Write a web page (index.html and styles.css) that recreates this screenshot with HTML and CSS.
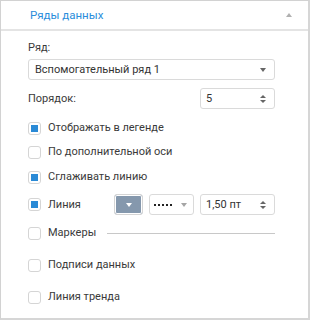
FILE: index.html
```html
<!DOCTYPE html>
<html lang="ru">

<head>
    <meta charset="UTF-8">
    <meta name="viewport" content="width=device-width, initial-scale=1.0">
    <link rel="stylesheet" href="styles.css">
</head>

<body>
    <div class="panel">
        <div class="head">
            <h2 class="title">Ряды данных</h2>
            <span class="collapse"></span>
        </div>

        <div class="content">
            <p class="label series-label">Ряд:</p>
            <div class="select">
                <span>Вспомогательный ряд 1</span>
                <span class="arrow"></span>
            </div>

            <div class="row order-row">
                <p class="label">Порядок:</p>
                <div class="spin">
                    <span>5</span>
                    <span class="spin-arrows"><i class="up"></i><i class="down"></i></span>
                </div>
            </div>

            <div class="check-row r1">
                <span class="check checked"></span>
                <p class="label">Отображать в легенде</p>
            </div>
            <div class="check-row r2">
                <span class="check"></span>
                <p class="label">По дополнительной оси</p>
            </div>
            <div class="check-row r3">
                <span class="check checked"></span>
                <p class="label">Сглаживать линию</p>
            </div>
            <div class="check-row line-row">
                <span class="check checked"></span>
                <p class="label line-label">Линия</p>
                <div class="color-btn"><span class="arrow white"></span></div>
                <div class="dash-select">
                    <span class="dots"></span>
                    <span class="arrow light"></span>
                </div>
                <div class="spin">
                    <span>1,50 пт</span>
                    <span class="spin-arrows"><i class="up"></i><i class="down"></i></span>
                </div>
            </div>
            <div class="check-row r5">
                <span class="check"></span>
                <p class="label markers-label">Маркеры</p>
                <span class="rule"></span>
            </div>
            <div class="check-row r6">
                <span class="check"></span>
                <p class="label">Подписи данных</p>
            </div>
            <div class="check-row r7">
                <span class="check"></span>
                <p class="label">Линия тренда</p>
            </div>
        </div>
    </div>
</body>

</html>
```

FILE: styles.css
```css
* {
    box-sizing: border-box;
    padding: 0;
    margin: 0;
    font-family: Roboto, "Noto Sans", sans-serif;
}

body {
    background-color: white;
}

.panel {
    width: 310px;
    height: 320px;
    border: 1px solid #d2d2d2;
    border-right: 2px solid #d6d6d6;
    border-bottom: 2px solid #d6d6d6;
    background-color: white;
}

.head {
    height: 30px;
    display: flex;
    align-items: center;
    justify-content: space-between;
    padding: 0 16px 1px 29px;
    border-bottom: 2px solid #e4e4e4;
}

.title {
    font-size: 11.5px;
    font-weight: normal;
    color: #2a8ddb;
}

.collapse {
    width: 0;
    height: 0;
    border-left: 3px solid transparent;
    border-right: 3px solid transparent;
    border-bottom: 4px solid #b0b0b0;
}

.content {
    padding: 0 33px 0 27px;
}

.label {
    font-size: 11px;
    line-height: 16px;
    color: #3a3a3a;
}

.series-label {
    margin-top: 9px;
}

.select {
    margin-top: 3px;
    height: 21px;
    border: 1px solid #dadada;
    border-radius: 3px;
    display: flex;
    align-items: center;
    justify-content: space-between;
    padding: 0 8px 0 6px;
    font-size: 11px;
    color: #333;
}

.arrow {
    width: 0;
    height: 0;
    border-left: 3.5px solid transparent;
    border-right: 3.5px solid transparent;
    border-top: 4px solid #666;
}

.arrow.white {
    border-top-color: white;
}

.arrow.light {
    border-top-color: #a5a5a5;
}

.row {
    display: flex;
    align-items: center;
    justify-content: space-between;
}

.order-row {
    margin-top: 8px;
}

.spin {
    width: 75px;
    height: 21px;
    border: 1px solid #dadada;
    border-radius: 3px;
    display: flex;
    align-items: center;
    justify-content: space-between;
    padding: 0 8px 0 5px;
    font-size: 11px;
    color: #333;
}

.spin-arrows {
    display: flex;
    flex-direction: column;
    gap: 2px;
}

.spin-arrows i {
    display: block;
    width: 0;
    height: 0;
    border-left: 3px solid transparent;
    border-right: 3px solid transparent;
}

.spin-arrows .up {
    border-bottom: 3px solid #666;
}

.spin-arrows .down {
    border-top: 3px solid #666;
}

.check-row {
    display: flex;
    align-items: center;
    height: 16px;
}

.check {
    width: 13px;
    height: 13px;
    border: 1px solid #d5d5d5;
    border-radius: 3px;
    margin-right: 7px;
    padding: 2px;
    flex-shrink: 0;
}

.check.checked::after {
    content: "";
    display: block;
    width: 7px;
    height: 7px;
    background-color: #2a8ad6;
}

.r1 { margin-top: 11px; }
.r2 { margin-top: 8px; }
.r3 { margin-top: 9px; }

.line-row {
    margin-top: 9px;
    height: 21px;
}

.line-label {
    width: 66px;
}

.color-btn {
    width: 29px;
    height: 21px;
    border: 1px solid #d5d5d5;
    border-radius: 3px;
    background-color: #8598ad;
    box-shadow: inset 0 0 0 1px #fff;
    display: flex;
    align-items: center;
    justify-content: center;
    margin-right: 6px;
}

.dash-select {
    width: 45px;
    height: 21px;
    border: 1px solid #dadada;
    border-radius: 3px;
    display: flex;
    align-items: center;
    justify-content: space-between;
    padding: 0 6px 0 4px;
    margin-right: 6px;
}

.dots {
    width: 18px;
    height: 2px;
    background: repeating-linear-gradient(to right, #222 0 2px, transparent 2px 4px);
}

.r5 {
    margin-top: 10px;
}

.markers-label {
    width: 59px;
}

.rule {
    flex: 1;
    height: 1px;
    background-color: #c8c8c8;
}

.r6 { margin-top: 16px; }
.r7 { margin-top: 16px; }
```
